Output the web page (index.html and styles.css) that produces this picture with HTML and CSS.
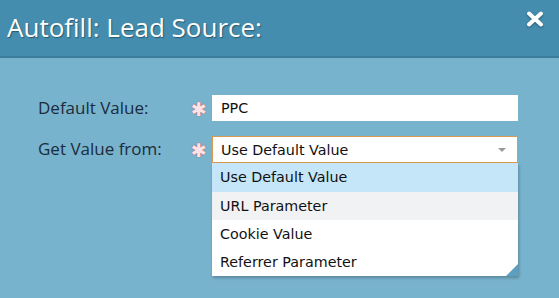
FILE: index.html
```html
<!DOCTYPE html>
<html>
<head>
    <title>Autofill: Lead Source</title>
    <link rel="stylesheet" href="styles.css">
</head>
<body>
    <div class="dialog">
        <div class="dialog-header">
            <h1>Autofill: Lead Source:</h1>
            <svg class="close" width="18" height="16" viewBox="0 0 18 16">
                <path d="M3 2.5 L15 13.5 M15 2.5 L3 13.5" stroke="white" stroke-width="4" stroke-linecap="round"/>
            </svg>
        </div>
        <div class="dialog-body">
            <div class="row">
                <label class="label">Default Value:</label>
                <span class="req">&#10033;</span>
                <div class="field">
                    <div class="input">PPC</div>
                </div>
            </div>
            <div class="row">
                <label class="label">Get Value from:</label>
                <span class="req">&#10033;</span>
                <div class="field">
                    <div class="select">
                        <span>Use Default Value</span>
                        <span class="arrow"></span>
                    </div>
                    <ul class="menu">
                        <li class="selected">Use Default Value</li>
                        <li class="hover">URL Parameter</li>
                        <li>Cookie Value</li>
                        <li>Referrer Parameter</li>
                    </ul>
                </div>
            </div>
        </div>
    </div>
</body>
</html>
```

FILE: styles.css
```css
body {
    margin: 0;
    padding: 0;
    font-family: "Open Sans", sans-serif;
    background-color: #78b3ce;
}

.dialog {
    height: 298px;
    overflow: hidden;
}

.dialog-header {
    background-color: #448dae;
    border-bottom: 2px solid #3a7d9d;
    height: 56px;
    display: flex;
    align-items: center;
    justify-content: space-between;
    padding: 0 15px 0 7px;
}

.dialog-header h1 {
    margin: 0 0 3px 0;
    font-weight: normal;
    font-size: 26px;
    color: white;
    text-shadow: 1px 1px 1px #2b5a70;
}

.close {
    margin-bottom: 19px;
    filter: drop-shadow(0 1px 1px #2b5a70);
}

.dialog-body {
    padding: 37px 0 0 38px;
}

.row {
    display: flex;
    align-items: flex-start;
    margin-bottom: 15px;
}

.label {
    width: 152px;
    font-size: 17px;
    color: #1b2b3c;
    line-height: 26px;
}

.req {
    width: 22px;
    box-sizing: border-box;
    padding-left: 1px;
    font-family: "DejaVu Sans", sans-serif;
    font-size: 19px;
    line-height: 28px;
    height: 26px;
    color: #fbe4e8;
    text-shadow: 0 0 1px #b8606c, 0 0 1px #b8606c;
}

.field {
    width: 306px;
    font-family: "DejaVu Sans", Verdana, sans-serif;
    font-size: 14.3px;
    color: #111;
}

.input {
    background: white;
    height: 26px;
    line-height: 26px;
    padding: 0 9px;
    box-sizing: border-box;
}

.select {
    background: white;
    border: 1px solid #d9994f;
    height: 27px;
    box-sizing: border-box;
    display: flex;
    align-items: center;
    justify-content: space-between;
    padding: 0 11px 0 8px;
}

.arrow {
    width: 0;
    height: 0;
    border-left: 4px solid transparent;
    border-right: 4px solid transparent;
    border-top: 4px solid #999;
}

.menu {
    list-style: none;
    margin: 0;
    padding: 0;
    background: white;
    box-shadow: 1px 2px 3px rgba(0, 0, 0, 0.25);
    position: relative;
}

.menu li {
    height: 28px;
    line-height: 28px;
    padding: 0 8px;
}

.menu li.selected {
    background: #c4e6f8;
    height: 29px;
}

.menu li.hover {
    background: #f1f2f4;
}

.menu::after {
    content: "";
    position: absolute;
    right: 0;
    bottom: 0;
    border-style: solid;
    border-width: 0 0 12px 12px;
    border-color: transparent transparent #5c9fc0 transparent;
}
```
